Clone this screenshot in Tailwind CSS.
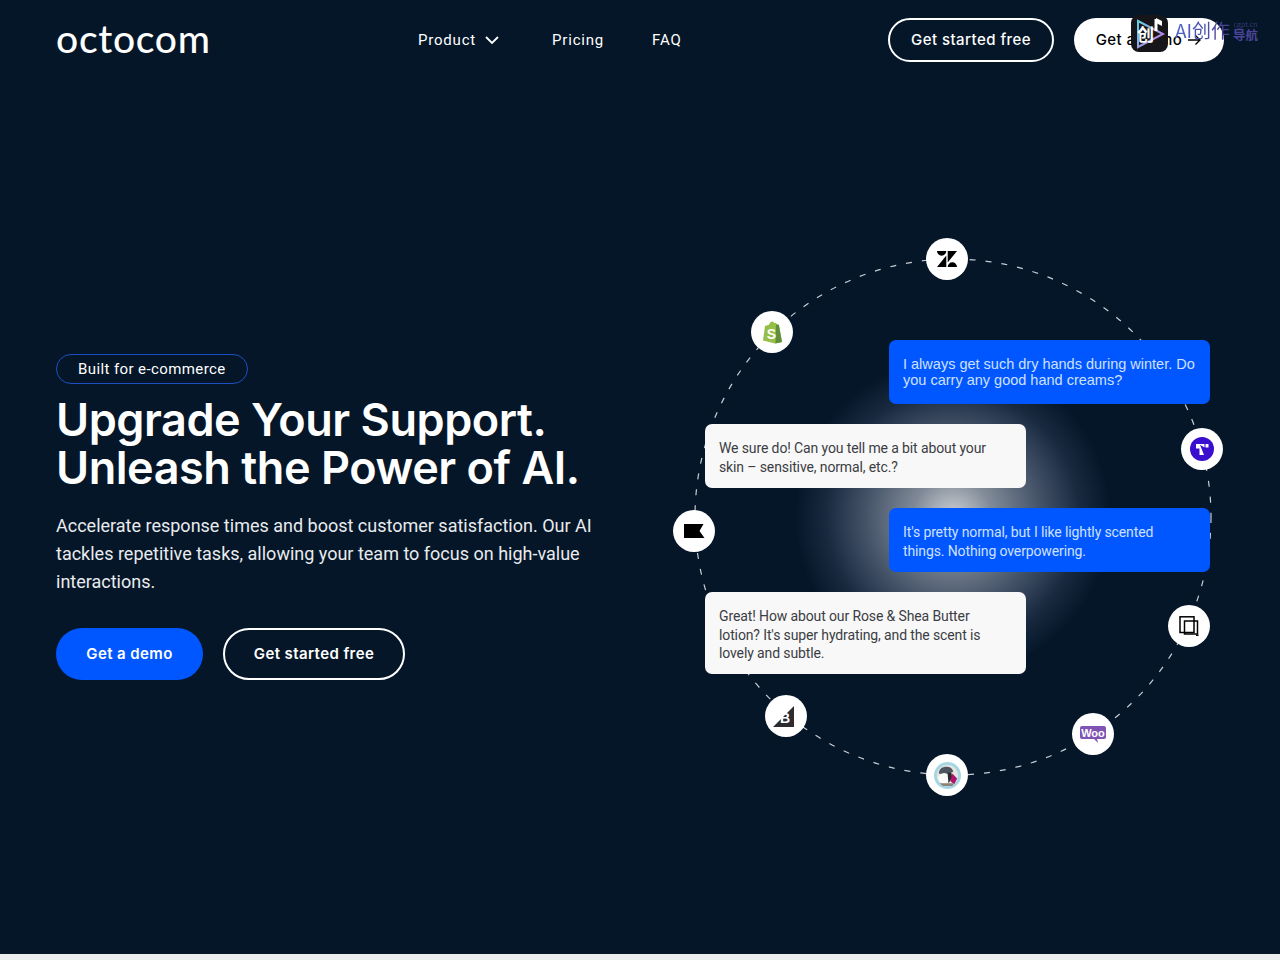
<!DOCTYPE html>
<html lang="en">
<head>
  <meta charset="UTF-8" />
  <title>Octocom</title>
  <script src="https://cdn.jsdelivr.net/npm/@tailwindcss/browser@4"></script>
</head>
<body class="bg-[#eceef0] font-['Inter',sans-serif]">
  <div class="relative h-[954px] bg-[#041628] text-white overflow-hidden">
    <!-- nav -->
    <header class="flex items-center h-20 px-14">
      <a href="#" class="w-[362px] text-[39px] leading-none tracking-[0.7px] font-medium font-['Lato',sans-serif] pb-1">octocom</a>
      <nav class="flex items-center gap-12 text-[15px] tracking-[0.8px] font-['Roboto',sans-serif]">
        <a href="#" class="flex items-center gap-2 mr-1">Product
          <svg class="w-4 h-4" viewBox="0 0 16 16" fill="none" stroke="currentColor" stroke-width="1.8"><path d="M2 5l6 6 6-6"/></svg>
        </a>
        <a href="#">Pricing</a>
        <a href="#">FAQ</a>
      </nav>
      <div class="ml-auto flex items-center gap-5 text-[15px] font-medium tracking-[0.45px]">
        <a href="#" class="h-11 w-[166px] flex items-center justify-center rounded-full border-2 border-white">Get started free</a>
        <a href="#" class="h-11 w-[150px] flex items-center justify-center gap-1 rounded-full bg-white text-black">Get a demo
          <svg class="w-4 h-4" viewBox="0 0 16 16" fill="none" stroke="currentColor" stroke-width="1.4"><path d="M2 8h12M9.500 3.500L14 8l-4.500 4.500"/></svg>
        </a>
      </div>
    </header>

    <!-- hero copy -->
    <section class="absolute left-14 top-[354px] w-[560px]">
      <div class="inline-flex items-center h-[30px] px-[21px] rounded-full border border-[#1d4fc4] text-[15px] tracking-[0.4px] font-['Roboto',sans-serif]">Built for e-commerce</div>
      <h1 class="mt-3 text-[45px] leading-[48px] font-semibold tracking-[-0.45px] whitespace-nowrap">Upgrade Your Support.<br>Unleash the Power of AI.</h1>
      <p class="mt-5 text-[18px] leading-[28px] font-['Roboto',sans-serif] text-[#e9ebee] w-[545px]">Accelerate response times and boost customer satisfaction. Our AI tackles repetitive tasks, allowing your team to focus on high-value interactions.</p>
      <div class="mt-8 flex gap-5 text-[15px] font-semibold tracking-[0.4px]">
        <a href="#" class="h-[52px] w-[147px] flex items-center justify-center rounded-full bg-[#0057ff]">Get a demo</a>
        <a href="#" class="h-[52px] w-[182px] flex items-center justify-center rounded-full border-2 border-white">Get started free</a>
      </div>
    </section>

    <!-- orbit diagram -->
    <div class="absolute left-[795px] top-[359px] w-[316px] h-[316px] rounded-full bg-[radial-gradient(circle_closest-side,rgba(255,255,255,0.8)_0%,rgba(205,210,220,0.62)_25%,rgba(135,145,170,0.5)_55%,rgba(70,85,115,0.32)_80%,rgba(4,22,40,0)_100%)]"></div>
    <svg class="absolute left-[685px] top-[249px]" width="536" height="536" viewBox="0 0 536 536" fill="none">
      <circle cx="268" cy="268" r="258" stroke="#c9ced6" stroke-width="1.2" stroke-dasharray="6 10"/>
    </svg>

    <div class="absolute left-[705px] top-[340px] w-[505px] flex flex-col gap-5 text-[14px] font-['Roboto',sans-serif]">
      <div class="self-end w-[321px] h-16 px-[14px] flex items-center rounded-[7px] bg-[#0057ff] text-[#cfe0ff] font-['Liberation_Sans',sans-serif] text-[14.5px] leading-4">I always get such dry hands during winter. Do you carry any good hand creams?</div>
      <div class="w-[321px] h-16 px-[14px] pt-[3px] flex items-center rounded-[7px] bg-[#f8f8f9] text-[#3b3d42] leading-[18.7px] tracking-[-0.12px]">We sure do! Can you tell me a bit about your skin – sensitive, normal, etc.?</div>
      <div class="self-end w-[321px] h-16 px-[14px] pt-[3px] flex items-center rounded-[7px] bg-[#0057ff] text-[#cfe0ff] leading-[18.7px] tracking-[-0.12px]">It's pretty normal, but I like lightly scented things. Nothing overpowering.</div>
      <div class="w-[321px] h-[82px] px-[14px] pt-1 flex items-center rounded-[7px] bg-[#f8f8f9] text-[#3b3d42] leading-[18.7px] tracking-[-0.12px]">Great! How about our Rose &amp; Shea Butter lotion? It's super hydrating, and the scent is lovely and subtle.</div>
    </div>

    <!-- zendesk -->
    <div class="absolute left-[926px] top-[238px] w-[42px] h-[42px] rounded-full bg-white flex items-center justify-center">
      <svg width="20" height="16" viewBox="0 0 20 16" fill="#000"><path d="M0 0h9.300a4.650 4.650 0 01-9.300 0zM10.700 0H20L10.700 11.500zM9.300 4.500V16H0zM10.700 16a4.650 4.650 0 019.300 0z"/></svg>
    </div>
    <!-- shopify -->
    <div class="absolute left-[751px] top-[311px] w-[42px] h-[42px] rounded-full bg-white flex items-center justify-center">
      <svg width="20" height="23" viewBox="0 0 20 23"><path d="M1 19.500L3 5l4-1.300C7.600 1.800 8.800.5 10.300.5c1 0 1.600.8 1.900 1.700l1.500-.4L15 3.400l2 .3L20 21l-7 1.500z" fill="#95bf47"/><path d="M14 3.500l2.800.3L20 21l-6.500 1.500z" fill="#5e8e3e"/><text x="9.500" y="18" text-anchor="middle" fill="#fff" font-size="14" font-weight="700" font-family="Liberation Sans">S</text></svg>
    </div>
    <!-- front -->
    <div class="absolute left-[1181px] top-[428px] w-[42px] h-[42px] rounded-full bg-white flex items-center justify-center">
      <div class="w-6 h-6 rounded-full bg-[#3a0ecf] flex items-center justify-center">
        <svg width="14" height="13" viewBox="0 0 14 13" fill="#fff"><path d="M1 1h8.500v3.500L5 1.800 9 12H4.500V5.500H1z"/><path d="M10.500 1h3v3.500h-3z"/></svg>
      </div>
    </div>
    <!-- flag -->
    <div class="absolute left-[673px] top-[510px] w-[42px] h-[42px] rounded-full bg-white flex items-center justify-center">
      <svg width="21" height="14" viewBox="0 0 21 14" fill="#000"><path d="M0 0h19.500l-4 7 5 7H0z"/></svg>
    </div>
    <!-- squares -->
    <div class="absolute left-[1168px] top-[605px] w-[42px] h-[42px] rounded-full bg-white flex items-center justify-center">
      <svg width="20" height="20" viewBox="0 0 20 20" fill="none" stroke="#000" stroke-width="1.500"><rect x="1" y=".8" width="14" height="15.700"/><rect x="5.500" y="5" width="13" height="13"/><path d="M17 19.300h2.500"/></svg>
    </div>
    <!-- woo -->
    <div class="absolute left-[1072px] top-[713px] w-[42px] h-[42px] rounded-full bg-white flex items-center justify-center">
      <svg width="26" height="17" viewBox="0 0 26 17"><path d="M2 0h22a2 2 0 012 2v9a2 2 0 01-2 2h-7l1 4-4-4H2a2 2 0 01-2-2V2a2 2 0 012-2z" fill="#7f54b3"/><text x="13" y="10.500" text-anchor="middle" fill="#fff" font-size="11" font-weight="700" font-family="Liberation Sans">Woo</text></svg>
    </div>
    <!-- prestashop -->
    <div class="absolute left-[926px] top-[754px] w-[42px] h-[42px] rounded-full bg-white flex items-center justify-center">
      <svg width="27" height="27" viewBox="0 0 28 28"><circle cx="14" cy="14" r="14" fill="#a6d5e3"/><circle cx="14" cy="14" r="11" fill="#e6e6e0"/><path d="M5 12C5 7 9 5 13 5c4 0 6 2 7 5l-5 2-5 1z" fill="#4d5560"/><ellipse cx="10.500" cy="17" rx="6" ry="5.500" fill="#fbfbf9"/><path d="M14 11l4 0 1 5-4 6z" fill="#2a2a30"/><path d="M19 12l5 5-3 6-4-3z" fill="#b0136b"/><path d="M6 22h15l-2 3H9z" fill="#8c8577"/></svg>
    </div>
    <!-- bigcommerce -->
    <div class="absolute left-[765px] top-[695px] w-[42px] h-[42px] rounded-full bg-white flex items-center justify-center">
      <svg class="-ml-[5px]" width="21" height="21" viewBox="0 0 21 21"><path d="M21 0v21H0z" fill="#2c2b31"/><text x="12" y="17" text-anchor="middle" fill="#fff" font-size="14" font-weight="700" font-family="Liberation Sans">B</text></svg>
    </div>

    <!-- browser extension overlay -->
    <div class="absolute left-[1131px] top-[15px] w-[37px] h-[37px] rounded-lg bg-[#15151a] flex items-center justify-center">
      <svg class="absolute inset-0" width="37" height="37" viewBox="0 0 37 37" fill="none"><defs><linearGradient id="tri" x1="0" y1="0" x2="1" y2="1"><stop offset="0" stop-color="#5fd0e0"/><stop offset="1" stop-color="#d070e0"/></linearGradient></defs><path d="M7 6l25 13L7 32z" stroke="url(#tri)" stroke-width="2"/><path d="M25 4v12" stroke="#fff" stroke-width="3"/><path d="M25 3l6 3v5l-6-3z" fill="#fff"/></svg>
      <span class="relative -ml-2 text-[17px] font-bold text-white font-['Noto_Sans_CJK_SC',sans-serif]">创</span>
    </div>
    <div class="absolute left-[1175px] top-[16px] text-[19px] leading-[28px] bg-linear-to-r from-[#4a66cc] to-[#4a3f8f] bg-clip-text text-transparent font-['Noto_Sans_CJK_SC',sans-serif]">AI创作</div>
    <div class="absolute left-[1233px] top-[21px] w-[25px] text-center text-[#4a4596] font-['Noto_Sans_CJK_SC',sans-serif]">
      <div class="text-[7px] leading-[7px] opacity-70">cgpt.cn</div>
      <div class="text-[12.500px] leading-[14px] font-bold">导航</div>
    </div>
  </div>
</body>
</html>
